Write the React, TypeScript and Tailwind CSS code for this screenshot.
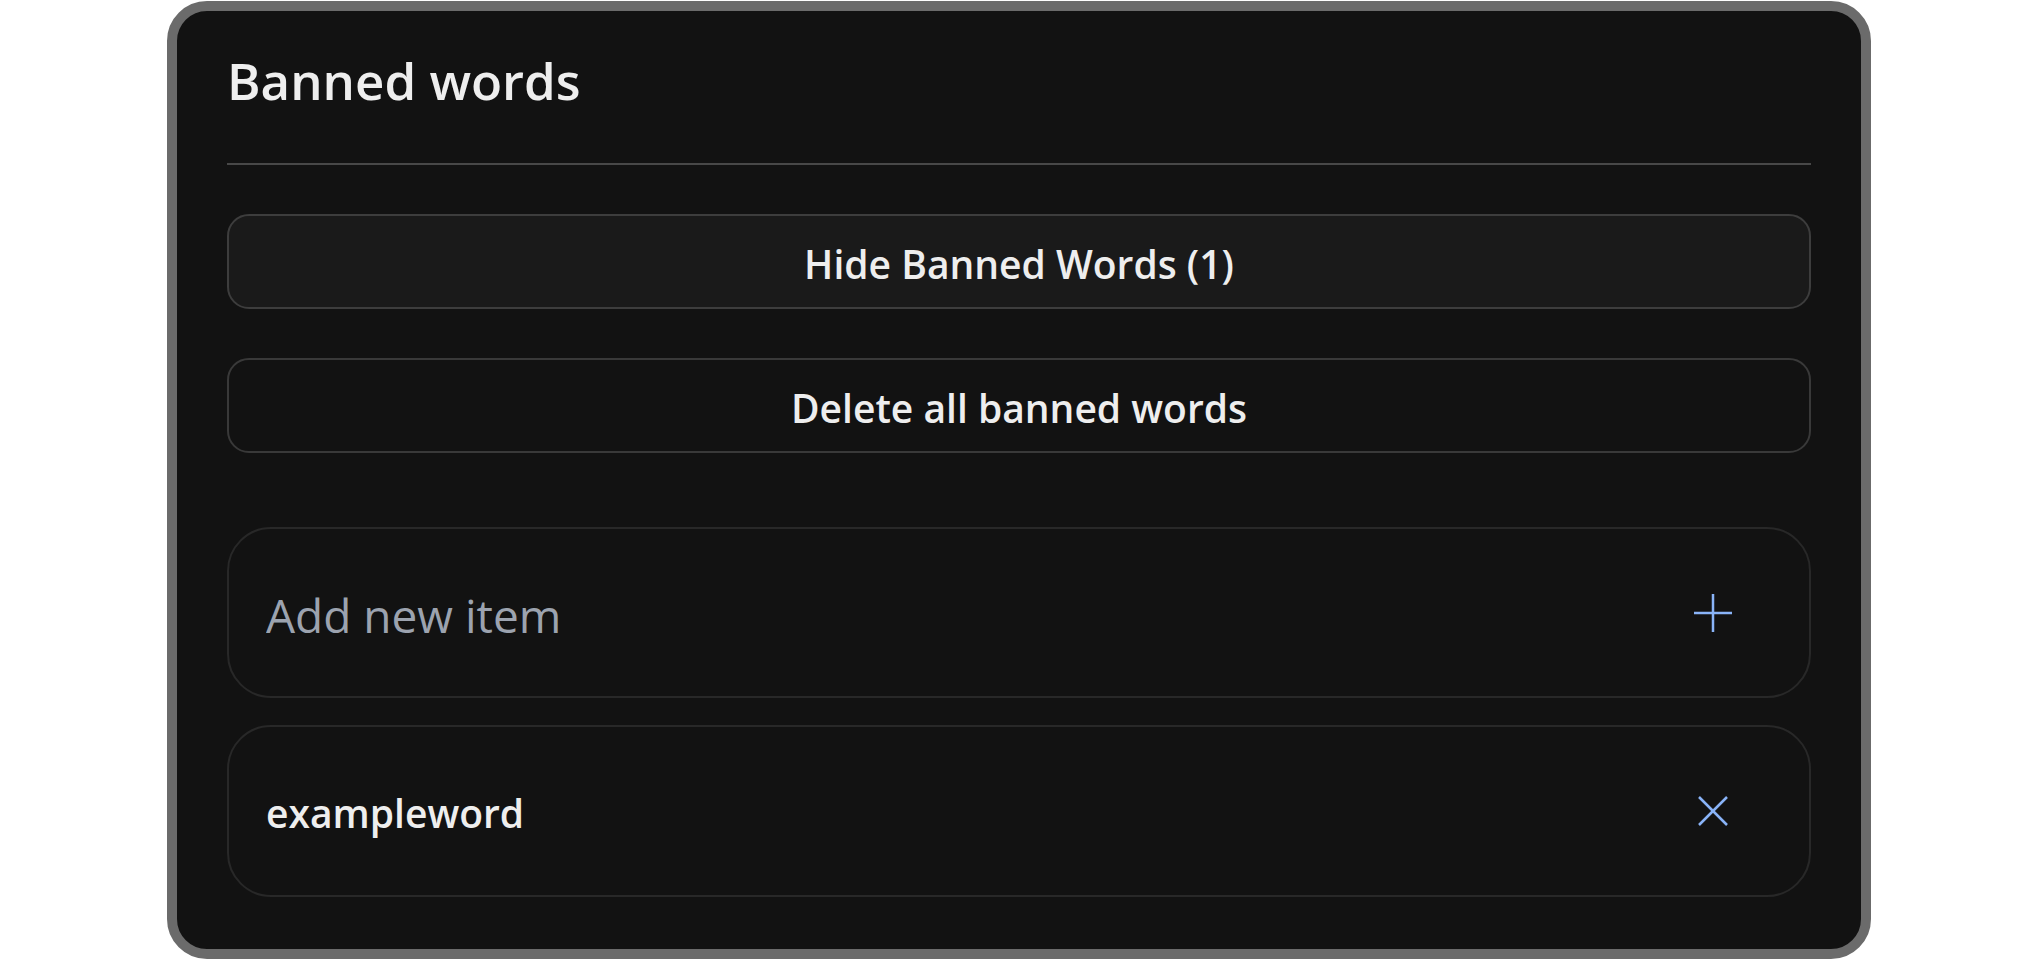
import React, { useState } from 'react';

const PlusIcon = () => (
    <svg width="48" height="48" viewBox="0 0 48 48" fill="none" stroke="#8ab4f8" strokeWidth="2.5">
        <line x1="5" y1="24" x2="43" y2="24" />
        <line x1="24" y1="5" x2="24" y2="43" />
    </svg>
);

const CloseIcon = () => (
    <svg width="48" height="48" viewBox="0 0 48 48" fill="none" stroke="#8ab4f8" strokeWidth="2.5">
        <line x1="10" y1="10" x2="38" y2="38" />
        <line x1="38" y1="10" x2="10" y2="38" />
    </svg>
);

const App: React.FC = () => {
    const [words, setWords] = useState<string[]>(['exampleword']);
    const [draft, setDraft] = useState('');
    const [visible, setVisible] = useState(true);

    const addWord = () => {
        const w = draft.trim();
        if (!w) return;
        setWords([...words, w]);
        setDraft('');
    };

    return (
        <div className="min-h-screen bg-white flex justify-center pt-px font-['Open_Sans',sans-serif]">
            <div className="w-[1704px] border-[10px] border-[#6b6b6b] rounded-[40px] bg-[#121212] px-[50px] pt-[39px] pb-[50px]">
                {/* Header */}
                <h2 className="text-[51px] leading-[61px] font-semibold text-[#eeeeee]">Banned words</h2>
                <div className="mt-[52px] h-[2px] bg-[#484848]" />

                {/* Actions */}
                <button
                    onClick={() => setVisible(!visible)}
                    className="mt-[49px] w-full h-[95px] flex items-center justify-center pt-[5px] rounded-[22px] border-2 border-[#3d3d3d] bg-[#1a1a1a] text-[39px] font-semibold text-[#eeeeee]"
                >
                    {visible ? 'Hide' : 'Show'} Banned Words ({words.length})
                </button>
                <button
                    onClick={() => setWords([])}
                    className="mt-[49px] w-full h-[95px] flex items-center justify-center pt-[5px] rounded-[22px] border-2 border-[#393939] bg-[#121212] text-[39px] font-semibold text-[#eeeeee]"
                >
                    Delete all banned words
                </button>

                {/* List */}
                <div className="mt-[74px] flex flex-col gap-[27px]">
                    <div className="h-[171px] flex items-center rounded-[44px] border-2 border-[#282828] pl-[37px] pr-[72px]">
                        <input
                            value={draft}
                            onChange={(e) => setDraft(e.target.value)}
                            onKeyDown={(e) => e.key === 'Enter' && addWord()}
                            placeholder="Add new item"
                            className="flex-1 bg-transparent outline-none pt-[5px] text-[46px] text-[#eeeeee] placeholder:text-[#9ca3af]"
                        />
                        <button onClick={addWord}>
                            <PlusIcon />
                        </button>
                    </div>
                    {visible &&
                        words.map((w, i) => (
                            <div
                                key={i}
                                className="h-[172px] flex items-center rounded-[44px] border-2 border-[#282828] pl-[37px] pr-[72px]"
                            >
                                <span className="flex-1 pt-[5px] text-[39px] font-semibold text-[#eeeeee]">{w}</span>
                                <button onClick={() => setWords(words.filter((_, j) => j !== i))}>
                                    <CloseIcon />
                                </button>
                            </div>
                        ))}
                </div>
            </div>
        </div>
    );
};

export default App;
